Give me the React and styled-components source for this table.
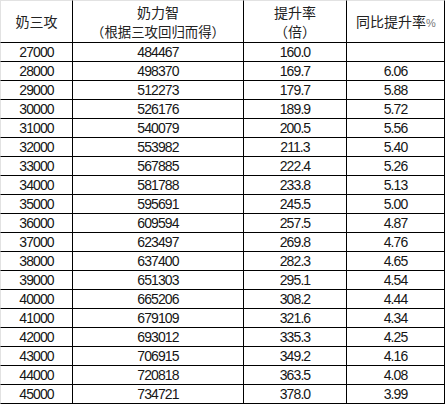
import styled, { createGlobalStyle } from "styled-components";

const GlobalStyle = createGlobalStyle`
  html, body {
    margin: 0;
    padding: 0;
    background: #ffffff;
  }
  body {
    font-family: "Liberation Sans", "Noto Sans CJK SC", sans-serif;
    color: #111;
  }
`;

const COLS = "73px 171px 103px 98px";

const Sheet = styled.div`
  width: 445px;
  display: flex;
  flex-direction: column;
`;

const HeadRow = styled.div`
  display: grid;
  grid-template-columns: ${COLS};
  height: 43px;
`;

const Row = styled.div`
  display: grid;
  grid-template-columns: ${COLS};
  height: 19px;
`;

const Cell = styled.div`
  box-sizing: border-box;
  display: flex;
  flex-direction: column;
  align-items: center;
  justify-content: center;
  border-right: 1px solid #000;
  border-bottom: 1px solid #000;
  border-left: ${(p) => (p.$first ? "1px solid #e2e2e2" : "none")};
  border-top: ${(p) => (p.$top ? "1px solid #e2e2e2" : "none")};
  font-size: 14px;
  line-height: 17px;
  white-space: nowrap;
`;

const Num = styled.span`
  font-family: "Liberation Sans", sans-serif;
  font-size: 14px;
  letter-spacing: -0.9px;
  color: #151515;
`;

// two-line header cells stack a title and a note
const Head = styled.div`
  font-family: "Noto Sans CJK SC", sans-serif;
  font-size: ${(p) => (p.$small ? "13.4px" : "14px")};
  color: #222;
  line-height: 19px;
  height: 19px;
  overflow: visible;
`;

const Pct = styled.span`
  font-family: "Liberation Sans", sans-serif;
  font-size: 11px;
  color: #777;
  letter-spacing: -1px;
`;

const rows = [
  ["27000", "484467", "160.0", ""],
  ["28000", "498370", "169.7", "6.06"],
  ["29000", "512273", "179.7", "5.88"],
  ["30000", "526176", "189.9", "5.72"],
  ["31000", "540079", "200.5", "5.56"],
  ["32000", "553982", "211.3", "5.40"],
  ["33000", "567885", "222.4", "5.26"],
  ["34000", "581788", "233.8", "5.13"],
  ["35000", "595691", "245.5", "5.00"],
  ["36000", "609594", "257.5", "4.87"],
  ["37000", "623497", "269.8", "4.76"],
  ["38000", "637400", "282.3", "4.65"],
  ["39000", "651303", "295.1", "4.54"],
  ["40000", "665206", "308.2", "4.44"],
  ["41000", "679109", "321.6", "4.34"],
  ["42000", "693012", "335.3", "4.25"],
  ["43000", "706915", "349.2", "4.16"],
  ["44000", "720818", "363.5", "4.08"],
  ["45000", "734721", "378.0", "3.99"],
];

export default function App() {
  return (
    <>
      <GlobalStyle />
      <Sheet>
        <HeadRow>
          <Cell $first $top>
            <Head>奶三攻</Head>
          </Cell>
          <Cell $top>
            <Head>奶力智</Head>
            <Head $small>（根据三攻回归而得）</Head>
          </Cell>
          <Cell $top>
            <Head>提升率</Head>
            <Head>（倍）</Head>
          </Cell>
          <Cell $top>
            <Head>
              同比提升率<Pct>%</Pct>
            </Head>
          </Cell>
        </HeadRow>
        {rows.map((r) => (
          <Row key={r[0]}>
            {r.map((v, i) => (
              <Cell key={i} $first={i === 0}>
                <Num>{v}</Num>
              </Cell>
            ))}
          </Row>
        ))}
      </Sheet>
    </>
  );
}
